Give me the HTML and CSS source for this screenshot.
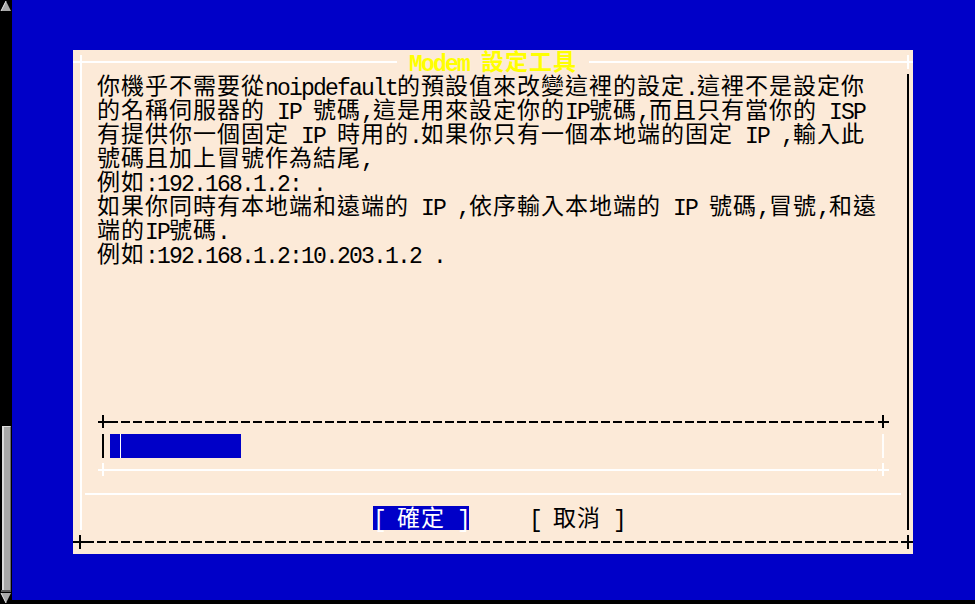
FILE: index.html
```html
<!DOCTYPE html>
<html lang="zh-Hant">
<head>
<meta charset="utf-8">
<title>Modem 設定工具</title>
<link rel="stylesheet" href="styles.css">
</head>
<body>
<div class="sb">
  <svg class="sb-up" width="12" height="12" viewBox="0 0 12 12"><polygon points="6,1 11,11 1,11" fill="#a9a9a9"/><polyline points="1,11 6,1" stroke="#ececec" stroke-width="1" fill="none"/></svg>
  <div class="sb-track"></div>
  <div class="sb-thumb"></div>
  <svg class="sb-down" width="12" height="14" viewBox="0 0 12 14"><rect x="1" y="0" width="10" height="2" fill="#5a5a5a"/><polygon points="1,3 11,3 6,13" fill="#a9a9a9"/><polyline points="1,3 6,13" stroke="#ececec" stroke-width="1" fill="none"/></svg>
</div>
<div class="term">
  <div class="dialog">
    <div class="edge">
      <span class="plus white tl"></span>
      <div class="hline white"><span class="title"> Modem <span class="w">設定工具</span> </span></div>
      <span class="plus white"></span>
    </div>
    <div class="mid">
      <div class="vline white left"></div>
      <div class="content">
        <div class="row"><span class="w">你機乎不需要從</span>noipdefault<span class="w">的預設值來改變這裡的設定</span>.<span class="w">這裡不是設定你</span></div>
        <div class="row"><span class="w">的名稱伺服器的</span> IP <span class="w">號碼</span>,<span class="w">這是用來設定你的</span>IP<span class="w">號碼</span>,<span class="w">而且只有當你的</span> ISP</div>
        <div class="row"><span class="w">有提供你一個固定</span> IP <span class="w">時用的</span>.<span class="w">如果你只有一個本地端的固定</span> IP ,<span class="w">輸入此</span></div>
        <div class="row"><span class="w">號碼且加上冒號作為結尾</span>,</div>
        <div class="row"><span class="w">例如</span>:192.168.1.2: .</div>
        <div class="row"><span class="w">如果你同時有本地端和遠端的</span> IP ,<span class="w">依序輸入本地端的</span> IP <span class="w">號碼</span>,<span class="w">冒號</span>,<span class="w">和遠</span></div>
        <div class="row"><span class="w">端的</span>IP<span class="w">號碼</span>.</div>
        <div class="row"><span class="w">例如</span>:192.168.1.2:10.203.1.2 .</div>
        <div class="blank"></div>
        <div class="box">
          <div class="box-edge"><span class="plus black in"></span><span class="hline dash"></span><span class="plus black in"></span></div>
          <div class="box-field"><span class="bar black"></span><span class="field"><span class="cursor"></span></span><span class="gap"></span><span class="bar white"></span></div>
          <div class="box-edge"><span class="plus white in"></span><span class="hline white"></span><span class="plus white in"></span></div>
        </div>
        <div class="sep"></div>
        <div class="buttons"><span class="btn on">[ <span class="w">確定</span> ]</span><span class="btn">[ <span class="w">取消</span> ]</span></div>
      </div>
      <div class="vline black right"></div>
    </div>
    <div class="edge">
      <span class="plus black"></span><span class="hline dash"></span><span class="plus black"></span>
    </div>
  </div>
</div>
</body>
</html>
```
FILE: styles.css
```css
html, body {
  margin: 0;
  padding: 0;
}

body {
  width: 975px;
  height: 604px;
  overflow: hidden;
  background: #000;
  display: flex;
  align-items: flex-start;
  font-family: "Liberation Mono", "Noto Sans CJK TC", monospace;
  font-size: 23px;
  letter-spacing: -1.8px;
  color: #000;
}

/* scrollbar */
.sb {
  width: 12px;
  height: 604px;
  flex: none;
  display: flex;
  flex-direction: column;
  background: #000;
}
.sb-up { display: block; flex: none; }
.sb-track { flex: 1; }
.sb-thumb {
  height: 164px;
  flex: none;
  margin: 0 1px 0 2px;
  background: #a8a8a8;
  border-left: 2px solid #dcdcdc;
  border-top: 1px solid #dcdcdc;
  border-right: 1px solid #6a6a6a;
  box-sizing: border-box;
}
.sb-down { display: block; flex: none; }

/* terminal */
.term {
  flex: 1;
  height: 600px;
  background: #0000c8;
  padding: 50px 0 0 61px;
  box-sizing: border-box;
}

.dialog {
  width: 840px;
  height: 504px;
  background: #fcead8;
  display: flex;
  flex-direction: column;
}

.white { --c: #ffffff; }
.black { --c: #000000; }

.edge {
  height: 24px;
  display: flex;
}

.plus {
  width: 12px;
  height: 24px;
  flex: none;
  background:
    linear-gradient(var(--c), var(--c)) 0 11px / 12px 2px no-repeat,
    linear-gradient(var(--c), var(--c)) 6px 5px / 2px 14px no-repeat;
}
.plus.tl {
  background:
    linear-gradient(var(--c), var(--c)) 0 11px / 12px 2px no-repeat,
    linear-gradient(var(--c), var(--c)) 7px 5px / 2px 19px no-repeat;
}
.plus.in {
  background:
    linear-gradient(var(--c), var(--c)) 1px 11px / 11px 2px no-repeat,
    linear-gradient(var(--c), var(--c)) 5px 5px / 2px 13px no-repeat;
}

.hline {
  flex: 1;
  height: 24px;
  display: flex;
  justify-content: center;
  background: linear-gradient(var(--c), var(--c)) 0 11px / 100% 2px no-repeat;
}
.hline.dash {
  background: repeating-linear-gradient(to right, #000 0 9px, transparent 9px 12px) 0 11px / 100% 2px no-repeat;
}

.title {
  height: 24px;
  line-height: 30px;
  white-space: pre;
  background: #fcead8;
  color: #ffff00;
  font-weight: bold;
}

.mid {
  height: 456px;
  display: flex;
}

.vline {
  width: 12px;
  flex: none;
}
.vline.left {
  background: linear-gradient(var(--c), var(--c)) 7px 0 / 2px 100% no-repeat;
}
.vline.right {
  background: linear-gradient(var(--c), var(--c)) 6px 0 / 2px 100% no-repeat;
}

.content {
  width: 816px;
  display: flex;
  flex-direction: column;
}

.row {
  height: 24px;
  line-height: 30px;
  padding-left: 12px;
  white-space: pre;
}

.w {
  font-family: "Noto Sans CJK TC", "Noto Sans CJK SC", sans-serif;
  font-size: 23px;
  letter-spacing: 1px;
  line-height: 20px;
  vertical-align: top;
}

.blank {
  height: 144px;
}

.box {
  width: 792px;
  margin-left: 12px;
  display: flex;
  flex-direction: column;
}
.box-edge {
  height: 24px;
  display: flex;
}
.box-field {
  height: 24px;
  display: flex;
}
.bar {
  width: 12px;
  flex: none;
  background: linear-gradient(var(--c), var(--c)) 5px 0 / 2px 24px no-repeat;
}
.bar.white {
  background: linear-gradient(var(--c), var(--c)) 5px 0 / 2px 26px no-repeat;
  opacity: 0.9;
}
.field {
  width: 131px;
  margin-left: 1px;
  background: #0000c8;
  display: flex;
}
.cursor {
  width: 10px;
  border-right: 1px solid #ffffff;
  background: #0000c8;
}
.gap {
  flex: 1;
}

.sep {
  height: 24px;
  background: linear-gradient(#fff, #fff) 0 11px / 100% 2px no-repeat;
}

.buttons {
  height: 24px;
  display: flex;
  gap: 60px;
  padding-left: 288px;
}
.btn {
  height: 24px;
  line-height: 30px;
  white-space: pre;
}
.btn.on {
  background: #0000c8;
  color: #ffffff;
}
```
